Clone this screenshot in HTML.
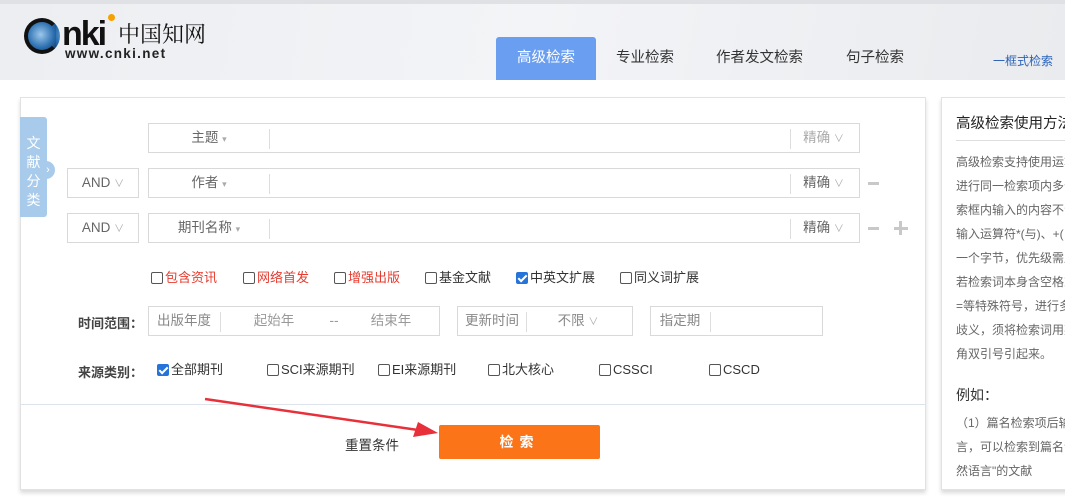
<!DOCTYPE html>
<html><head><meta charset="utf-8"><style>
*{margin:0;padding:0;box-sizing:border-box}
body{width:1065px;height:502px;overflow:hidden;background:#f2f3f5;font-family:"Liberation Sans","Noto Sans CJK SC",sans-serif;font-size:13px;color:#333;position:relative}
.a{position:absolute}
.hdr{left:0;top:0;width:1065px;height:80px;background:linear-gradient(100deg,#eceef1 0%,#f3f4f7 50%,#e9ebee 100%);border-top:4px solid #dfe1e4}
.tab{top:37px;height:43px;line-height:43px;font-size:14.5px;color:#333}
.box{border:1px solid #d9d9d9;background:#fff;height:30px}
.lab{color:#666;font-size:13.5px;line-height:28px;text-align:center}
.sep{width:1px;height:20px;background:#ddd;top:5px}
.g{color:#aaa}
.cb{display:inline-block;width:12px;height:12px;border:1px solid #555;border-radius:2px;vertical-align:-2px;margin-right:2px;background:#fff}
.ck{background:#2673d9;border-color:#2673d9;position:relative}
.ck:after{content:"";position:absolute;left:3px;top:0px;width:3px;height:7px;border:solid #fff;border-width:0 2px 2px 0;transform:rotate(45deg)}
.t{font-size:13px;line-height:16px}
.r{color:#e63b2e}
.rp{color:#666;font-size:12px;line-height:24px}
</style></head><body>
<div class="a hdr"></div>
<div class="a" style="left:24px;top:18px;width:36px;height:36px;border-radius:50%;background:radial-gradient(circle at 45% 45%,#9cc8ec,#2c6fb0 60%,#123a6a);border:4px solid #111;border-right-color:transparent"></div>
<div class="a" style="left:62px;top:14px;font:bold 34px/40px 'Liberation Sans';color:#111;letter-spacing:-2px">nki</div>
<div class="a" style="left:108px;top:14px;width:7px;height:7px;border-radius:50%;background:#f5a100"></div>
<div class="a" style="left:118px;top:22px;font:22px/24px 'Noto Serif CJK SC',serif;color:#111">中国知网</div>
<div class="a" style="left:65px;top:47px;font:bold 13.5px/14px 'Liberation Sans';color:#222;letter-spacing:1.3px">www.cnki.net</div>
<div class="a tab" style="left:496px;width:100px;background:#6a9ef0;color:#fff;text-align:center;border-radius:3px 3px 0 0">高级检索</div>
<div class="a tab" style="left:616px">专业检索</div>
<div class="a tab" style="left:716px">作者发文检索</div>
<div class="a tab" style="left:846px">句子检索</div>
<div class="a" style="left:993px;top:52px;font-size:12px;color:#2b63b8">一框式检索</div>
<div class="a" style="left:0;top:80px;width:1065px;height:422px;background:#fff"></div>
<div class="a" style="left:20px;top:97px;width:906px;height:393px;border:1px solid #e2e2e2;box-shadow:0 3px 4px rgba(0,0,0,.15);background:#fff"></div>
<div class="a" style="left:941px;top:97px;width:130px;height:393px;border:1px solid #e2e2e2;box-shadow:0 3px 4px rgba(0,0,0,.15);background:#fff"></div>
<div class="a" style="left:20px;top:117px;width:27px;height:100px;background:#a8cbeb;border-radius:0 3px 3px 0;color:#fff;font-size:14px;line-height:19px;text-align:center;padding-top:17px;width:27px">文<br>献<br>分<br>类</div>
<div class="a" style="left:41px;top:161px;width:14px;height:18px;background:#a8cbeb;border-radius:0 9px 9px 0;color:#fff;font-size:11px;line-height:18px;text-align:center">›</div>
<!-- rows -->
<div class="a box" style="left:148px;top:123px;width:712px"><div class="a lab" style="left:0;width:120px">主题 <span class="g" style="font-size:9px">▾</span></div><div class="a sep" style="left:120px"></div><div class="a sep" style="left:641px"></div><div class="a lab g" style="left:652px;width:45px">精确 <span style="font-size:10px">∨</span></div></div>
<div class="a box" style="left:67px;top:168px;width:72px"><div class="a lab" style="left:0;width:70px">AND <span class="g" style="font-size:10px">∨</span></div></div>
<div class="a box" style="left:148px;top:168px;width:712px"><div class="a lab" style="left:0;width:120px">作者 <span class="g" style="font-size:9px">▾</span></div><div class="a sep" style="left:120px"></div><div class="a sep" style="left:641px"></div><div class="a lab" style="left:652px;width:45px;color:#666">精确 <span class="g" style="font-size:10px">∨</span></div></div>
<div class="a box" style="left:67px;top:213px;width:72px"><div class="a lab" style="left:0;width:70px">AND <span class="g" style="font-size:10px">∨</span></div></div>
<div class="a box" style="left:148px;top:213px;width:712px"><div class="a lab" style="left:0;width:120px">期刊名称 <span class="g" style="font-size:9px">▾</span></div><div class="a sep" style="left:120px"></div><div class="a sep" style="left:641px"></div><div class="a lab" style="left:652px;width:45px;color:#666">精确 <span class="g" style="font-size:10px">∨</span></div></div>
<div class="a" style="left:868px;top:182px;width:11px;height:3px;background:#c8c8c8"></div>
<div class="a" style="left:868px;top:227px;width:11px;height:3px;background:#c8c8c8"></div>
<div class="a" style="left:894px;top:227px;width:14px;height:3px;background:#c8c8c8"></div>
<div class="a" style="left:899px;top:221px;width:3px;height:14px;background:#c8c8c8"></div>
<!-- checkboxes -->
<div class="a t" style="left:151px;top:270px"><span class="cb"></span><span class="r">包含资讯</span></div>
<div class="a t" style="left:243px;top:270px"><span class="cb"></span><span class="r">网络首发</span></div>
<div class="a t" style="left:334px;top:270px"><span class="cb"></span><span class="r">增强出版</span></div>
<div class="a t" style="left:425px;top:270px"><span class="cb"></span>基金文献</div>
<div class="a t" style="left:516px;top:270px"><span class="cb ck"></span>中英文扩展</div>
<div class="a t" style="left:620px;top:270px"><span class="cb"></span>同义词扩展</div>
<!-- time -->
<div class="a" style="left:78px;top:313px;font-weight:bold;color:#444">时间范围：</div>
<div class="a box" style="left:148px;top:306px;width:292px"><div class="a lab" style="left:0;width:70px;color:#888">出版年度</div><div class="a sep" style="left:71px"></div><div class="a lab" style="left:95px;width:60px;color:#999">起始年</div><div class="a lab" style="left:175px;width:20px;color:#999">--</div><div class="a lab" style="left:212px;width:60px;color:#999">结束年</div></div>
<div class="a box" style="left:457px;top:306px;width:176px"><div class="a lab" style="left:0;width:68px;color:#888">更新时间</div><div class="a sep" style="left:68px"></div><div class="a lab" style="left:90px;width:60px;color:#888">不限 <span class="g" style="font-size:10px">∨</span></div></div>
<div class="a box" style="left:650px;top:306px;width:173px"><div class="a lab" style="left:0;width:58px;color:#888">指定期</div><div class="a sep" style="left:59px"></div></div>
<!-- source -->
<div class="a" style="left:78px;top:362px;font-weight:bold;color:#444">来源类别：</div>
<div class="a t" style="left:157px;top:362px"><span class="cb ck"></span>全部期刊</div>
<div class="a t" style="left:267px;top:362px"><span class="cb"></span>SCI来源期刊</div>
<div class="a t" style="left:378px;top:362px"><span class="cb"></span>EI来源期刊</div>
<div class="a t" style="left:488px;top:362px"><span class="cb"></span>北大核心</div>
<div class="a t" style="left:599px;top:362px"><span class="cb"></span>CSSCI</div>
<div class="a t" style="left:709px;top:362px"><span class="cb"></span>CSCD</div>
<div class="a" style="left:21px;top:404px;width:904px;height:1px;background:#dde3ea"></div>
<div class="a" style="left:345px;top:434px;font-size:13.5px;color:#333">重置条件</div>
<div class="a" style="left:439px;top:425px;width:161px;height:34px;background:#fb7418;border-radius:2px;color:#fff;font-weight:bold;font-size:14px;line-height:34px;text-align:center;letter-spacing:6px">检索</div>
<svg class="a" style="left:0;top:0" width="1065" height="502"><line x1="205" y1="399" x2="418" y2="430" stroke="#e8303a" stroke-width="2.5"/><polygon points="438,433 413,437 418,422" fill="#e8303a"/></svg>
<!-- right panel -->
<div class="a" style="left:956px;top:112px;font-size:14.5px;color:#222;white-space:nowrap">高级检索使用方法</div>
<div class="a" style="left:956px;top:140px;width:110px;height:1px;background:#ddd"></div>
<div class="a rp" style="left:956px;top:150px;width:120px;white-space:nowrap;overflow:hidden">高级检索支持使用运算<br>进行同一检索项内多个<br>索框内输入的内容不会<br>输入运算符*(与)、+(<br>一个字节，优先级需用<br>若检索词本身含空格或<br>=等特殊符号，进行多<br>歧义，须将检索词用英<br>角双引号引起来。</div>
<div class="a" style="left:956px;top:385px;font-size:14px;color:#333">例如：</div>
<div class="a rp" style="left:956px;top:411px;width:120px;white-space:nowrap;overflow:hidden">（1）篇名检索项后输<br>言，可以检索到篇名包<br>然语言"的文献</div>
</body></html>
